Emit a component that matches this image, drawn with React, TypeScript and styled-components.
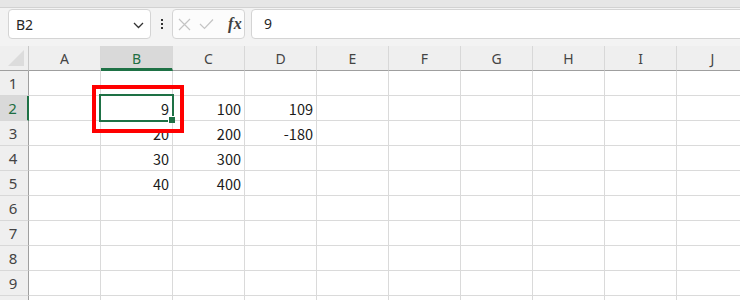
import styled, { createGlobalStyle, css } from "styled-components";

const GlobalStyle = createGlobalStyle`
  html, body {
    margin: 0;
    padding: 0;
    background: #ffffff;
    overflow: hidden;
  }
  * {
    box-sizing: border-box;
  }
`;

const COLS = ["A", "B", "C", "D", "E", "F", "G", "H", "I", "J"];
const ROWS = [1, 2, 3, 4, 5, 6, 7, 8, 9, 10];
const VISIBLE_LABELS = 9; // row 10 is only a sliver at the bottom edge

// values by row, column letter
const data: Record<number, Record<string, string>> = {
  2: { B: "9", C: "100", D: "109" },
  3: { B: "20", C: "200", D: "-180" },
  4: { B: "30", C: "300" },
  5: { B: "40", C: "400" },
};

const SEL_COL = "B";
const SEL_ROW = 2;

export default function App() {
  return (
    <>
      <GlobalStyle />
      <Page>
        <TopStrip />
        <FormulaBar>
          <NameBox>
            <span>B2</span>
            <svg width="11" height="7" viewBox="0 0 11 7">
              <path d="M1 1 L5.5 5.5 L10 1" fill="none" stroke="#333" strokeWidth="1.3" />
            </svg>
          </NameBox>
          <Dots>
            <i />
            <i />
            <i />
          </Dots>
          <FxBox>
            <svg width="13" height="13" viewBox="0 0 13 13">
              <path d="M1 1 L12 12 M12 1 L1 12" stroke="#c4c4c4" strokeWidth="1.2" />
            </svg>
            <svg width="15" height="12" viewBox="0 0 15 12">
              <path d="M1 6 L5.5 10.5 L14 1.5" fill="none" stroke="#c4c4c4" strokeWidth="1.2" />
            </svg>
            <FxLabel>fx</FxLabel>
          </FxBox>
          <FormulaInput>9</FormulaInput>
        </FormulaBar>

        <Sheet>
          <Grid>
            <Corner>
              <svg width="20" height="20" viewBox="0 0 20 20">
                <path d="M18 2 L18 18 L2 18 Z" fill="#dcdcdc" />
              </svg>
            </Corner>
            {COLS.map((c) => (
              <ColHead key={c} $selected={c === SEL_COL}>
                {c}
              </ColHead>
            ))}
            {ROWS.map((r) => (
              <Row key={r}>
                <RowHead $selected={r === SEL_ROW}>{r <= VISIBLE_LABELS ? r : ""}</RowHead>
                {COLS.map((c) => (
                  <Cell key={c}>{data[r]?.[c] ?? ""}</Cell>
                ))}
              </Row>
            ))}
          </Grid>
          <Selection>
            <FillHandle />
          </Selection>
          <Highlight />
        </Sheet>
      </Page>
    </>
  );
}

//style
const Page = styled.div`
  width: 740px;
  height: 300px;
  background: #f3f3f3;
  display: flex;
  flex-direction: column;
  overflow: hidden;
  font-family: "Noto Sans", "Open Sans", sans-serif;
`;

const TopStrip = styled.div`
  height: 8px;
  flex-shrink: 0;
  background: #e6e6e6;
  border-bottom: 1px solid #d2d2d2;
`;

const FormulaBar = styled.div`
  height: 38px;
  flex-shrink: 0;
  display: flex;
  align-items: flex-start;
  padding: 1px 0 0 8px;
`;

const boxBase = css`
  height: 30px;
  background: #ffffff;
  border: 1px solid #d4d4d4;
  border-radius: 4px;
`;

const NameBox = styled.div`
  ${boxBase};
  width: 143px;
  display: flex;
  align-items: center;
  justify-content: space-between;
  padding: 0 6px 0 7px;
  font-size: 14px;
  color: #262626;
  span {
    padding-top: 1px;
  }
  svg {
    margin-top: 2px;
  }
`;

const Dots = styled.div`
  width: 21px;
  height: 30px;
  display: flex;
  flex-direction: column;
  align-items: center;
  justify-content: center;
  gap: 2px;
  i {
    display: block;
    width: 2px;
    height: 2px;
    background: #333;
  }
`;

const FxBox = styled.div`
  ${boxBase};
  width: 73px;
  background: #fcfcfc;
  display: flex;
  align-items: center;
  gap: 8px;
  padding: 0 0 0 5px;
  svg {
    flex-shrink: 0;
  }
`;

const FxLabel = styled.span`
  font-family: "Liberation Serif", "DejaVu Serif", serif;
  font-style: italic;
  font-weight: bold;
  font-size: 16px;
  color: #404040;
  margin-left: 6px;
  letter-spacing: 0.5px;
`;

const FormulaInput = styled.div`
  ${boxBase};
  flex: 1;
  margin-left: 6px;
  margin-right: -10px;
  display: flex;
  align-items: center;
  padding: 0 0 1px 12px;
  font-size: 14px;
  color: #262626;
`;

const Sheet = styled.div`
  position: relative;
  flex: 1;
  background: #ffffff;
`;

const Grid = styled.div`
  display: grid;
  grid-template-columns: 29px repeat(10, 72px);
  grid-auto-rows: 25px;
`;

const Row = styled.div`
  display: contents;
`;

const headBase = css`
  background: #efefef;
  color: #444;
  font-size: 14px;
  display: flex;
  align-items: center;
  justify-content: center;
`;

const Corner = styled.div`
  ${headBase};
  border-right: 1px solid #c8c8c8;
  border-bottom: 1px solid #9f9f9f;
  align-items: flex-end;
  justify-content: flex-end;
  padding: 0 2px 2px 0;
`;

const ColHead = styled.div<{ $selected?: boolean }>`
  ${headBase};
  border-right: 1px solid #d8d8d8;
  border-bottom: ${(p) => (p.$selected ? "3px solid #1e7145" : "1px solid #9f9f9f")};
  background: ${(p) => (p.$selected ? "#d9d9d9" : "#efefef")};
  color: ${(p) => (p.$selected ? "#1e6e42" : "#444")};
  padding-top: ${(p) => (p.$selected ? "2px" : "0")};
`;

const RowHead = styled.div<{ $selected?: boolean }>`
  ${headBase};
  border-bottom: 1px solid #d8d8d8;
  border-right: ${(p) => (p.$selected ? "2px solid #1e7145" : "1px solid #9f9f9f")};
  background: ${(p) => (p.$selected ? "#d9d9d9" : "#efefef")};
  color: ${(p) => (p.$selected ? "#1e6e42" : "#444")};
  padding-right: 2px;
  font-size: 15px;
`;

const Cell = styled.div`
  border-right: 1px solid #dadada;
  border-bottom: 1px solid #dadada;
  display: flex;
  align-items: center;
  justify-content: flex-end;
  padding: 1px 3px 0 0;
  font-family: "Noto Sans CJK JP", "Noto Sans", sans-serif;
  font-size: 14.5px;
  color: #1a1a1a;
`;

// active cell border for B2
const Selection = styled.div`
  position: absolute;
  left: 99px;
  top: 48px;
  width: 75px;
  height: 28px;
  border: 2px solid #1e7145;
`;

const FillHandle = styled.div`
  position: absolute;
  right: -3px;
  bottom: -3px;
  width: 7px;
  height: 7px;
  background: #1e7145;
  border: 1px solid #ffffff;
  border-right: none;
  border-bottom: none;
`;

// red annotation box
const Highlight = styled.div`
  position: absolute;
  left: 92px;
  top: 39px;
  width: 92px;
  height: 48px;
  border: 4px solid #ff0000;
`;
